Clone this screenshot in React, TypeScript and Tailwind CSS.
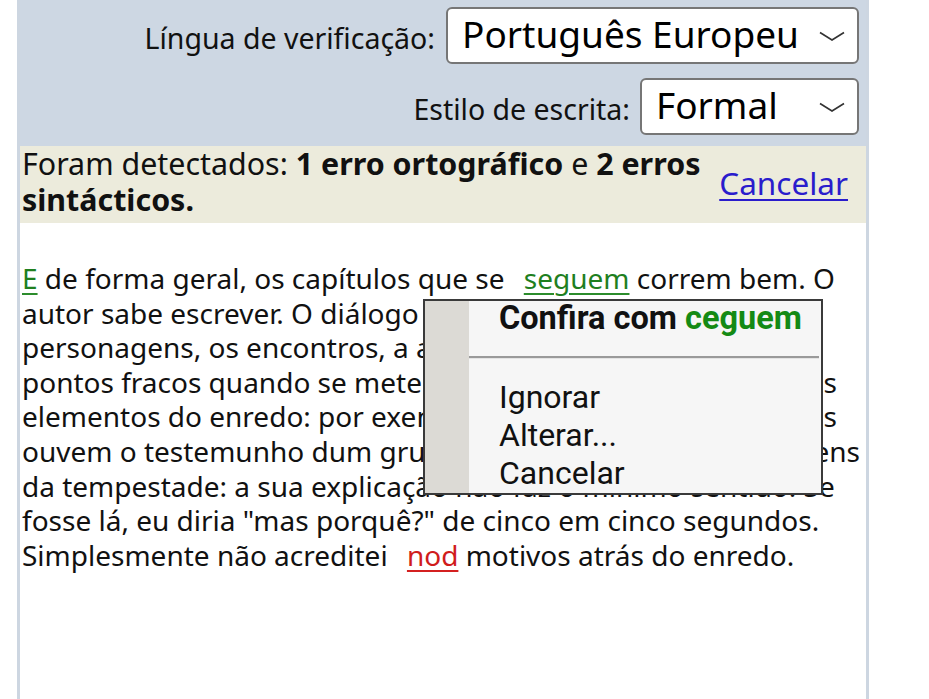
import React from "react";

const NOTO = { fontFamily: "'Noto Sans', 'Open Sans', sans-serif" };
const ROBOTO = { fontFamily: "Roboto, 'Liberation Sans', sans-serif" };

function Chevron() {
  return (
    <svg width="26" height="10" viewBox="0 0 26 10" className="shrink-0">
      <path d="M1 1.5 L13 9 L25 1.5" fill="none" stroke="#333" strokeWidth="1.6" />
    </svg>
  );
}

function Select({ value, width }: { value: string; width: string }) {
  return (
    <div
      className={`flex h-[57px] items-center justify-between rounded-[6px] border-2 border-[#767676] bg-white pl-[14px] pr-[12px] ${width}`}
    >
      <span className="pb-[5px] text-[37px] leading-none text-black">{value}</span>
      <Chevron />
    </div>
  );
}

const green = "text-[#1f7f1f] underline decoration-2 underline-offset-[4px] decoration-[#2c8c2c]";

export default function App() {
  return (
    <div className="relative h-[699px] w-[929px] overflow-hidden bg-white text-black" style={NOTO}>
      <div className="ml-[17px] flex h-full w-[852px] flex-col border-x-[3px] border-[#cdd6e1]">
        <div className="flex h-[146px] flex-col items-end bg-[#cdd7e3] pr-[7px] pt-[7px]">
          <div className="flex items-center gap-[11px]">
            <span className="mt-[6px] text-[28.5px] text-[#111]">Língua de verificação:</span>
            <Select value="Português Europeu" width="w-[413px]" />
          </div>
          <div className="mt-[14px] flex items-center gap-[10px]">
            <span className="mt-[6px] text-[28.5px] text-[#111]">Estilo de escrita:</span>
            <Select value="Formal" width="w-[219px]" />
          </div>
        </div>
        <div className="flex h-[77px] items-start justify-between bg-[#ecebdc] pl-[2px] pr-[18px]">
          <p className="w-[695px] text-[30.4px] leading-[36px] text-[#111]">
            Foram detectados: <b>1 erro ortográfico</b> e <b>2 erros sintácticos.</b>
          </p>
          <a
            href="#"
            className="mt-[21px] text-[31.5px] leading-none text-[#2a1ccc] underline decoration-2 underline-offset-[4px]"
          >
            Cancelar
          </a>
        </div>
        <div className="whitespace-nowrap pl-[2px] pt-[38px] text-[28px] leading-[34.6px] text-[#111]">
          <div>
            <span className={green}>E</span> de forma geral, os capítulos que se{" "}
            <span className={`ml-[12px] ${green}`}>seguem</span> correm bem. O
          </div>
          <div>autor sabe escrever. O diálogo entre as</div>
          <div>personagens, os encontros, a ação, tudo</div>
          <div className="flex w-[815px]">
            <span>pontos fracos quando se mete</span>
            <span className="flex-1 overflow-hidden">&nbsp;em alguns do</span>
            <span>s</span>
          </div>
          <div className="flex w-[815px]">
            <span>elementos do enredo: por exem</span>
            <span className="flex-1 overflow-hidden">plo, quando o</span>
            <span>s</span>
          </div>
          <div className="flex w-[838px]">
            <span>ouvem o testemunho dum gru</span>
            <span className="flex-1 overflow-hidden">po de personag</span>
            <span>ens</span>
          </div>
          <div>da tempestade: a sua explicação não faz o mínimo sentido. Se</div>
          <div>fosse lá, eu diria "mas porquê?" de cinco em cinco segundos.</div>
          <div>
            Simplesmente não acreditei{" "}
            <span className="ml-[12px] text-[#d01c1c] underline decoration-2 underline-offset-[4px] decoration-[#d42020]">
              nod
            </span>{" "}
            motivos atrás do enredo.
          </div>
        </div>
      </div>

      <div
        className="absolute left-[423px] top-[299px] flex h-[196px] w-[400px] border-2 border-[#3a3a3a] bg-[#f6f6f6]"
        style={ROBOTO}
      >
        <div className="w-[44px] shrink-0 bg-[#dcdad5]" />
        <div className="flex flex-1 flex-col">
          <div className="pl-[30px] text-[32.5px] font-bold leading-[34px] text-[#111]">
            Confira com <span className="text-[#148a14]">ceguem</span>
          </div>
          <div className="mr-[2px] mt-[21px] h-[3px] border-t-2 border-[#9a9a9a] bg-[#e4e4e4]" />
          <div className="flex flex-col pl-[30px] pt-[19px] text-[32px] leading-[38px] text-[#111]">
            <span>Ignorar</span>
            <span>Alterar...</span>
            <span>Cancelar</span>
          </div>
        </div>
      </div>
    </div>
  );
}
